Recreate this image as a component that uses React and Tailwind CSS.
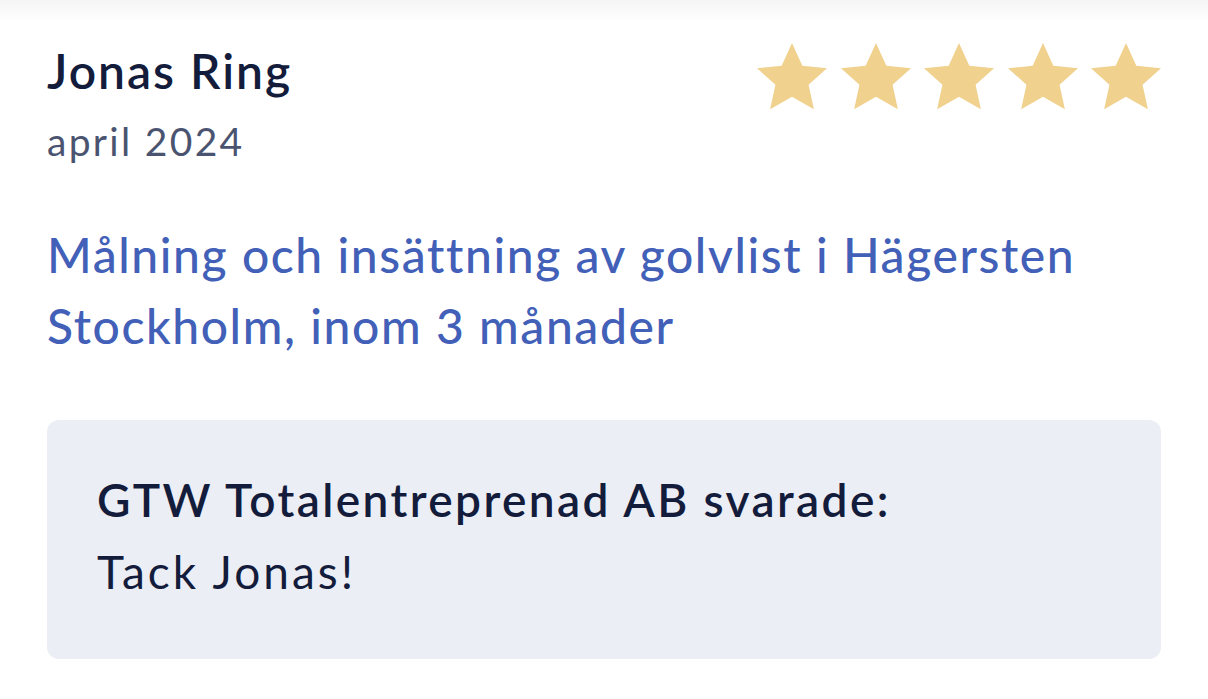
const Star = () => (
  <svg width="70" height="68" viewBox="0.8 0.6 22.4 21.2" className="shrink-0">
    <path d="M12 0.6l3.3 7.3 7.9 0.8-5.9 5.3 1.7 7.8L12 17.8l-7 4 1.7-7.8L0.8 8.7l7.9-0.8z" fill="#f0d18e" />
  </svg>
);

export default function App() {
  return (
    <div
      className="min-h-screen bg-white"
      style={{ fontFamily: "Lato, 'Noto Sans', sans-serif" }}
    >
      <div className="h-[22px] bg-gradient-to-b from-[#f5f5f6] to-white" />

      <div className="px-[47px] pt-[17px]">
        {/* Header row */}
        <div className="flex items-start justify-between">
          <div>
            <h2 className="text-[48px] leading-[64px] font-semibold tracking-[2px] text-[#141c3c]">
              Jonas Ring
            </h2>
            <p className="text-[39px] leading-[76px] tracking-[2.3px] text-[#4a5470]">
              april 2024
            </p>
          </div>
          <div className="flex gap-[13.5px] mt-[3px]">
            <Star />
            <Star />
            <Star />
            <Star />
            <Star />
          </div>
        </div>

        {/* Title */}
        <p className="mt-[40px] text-[48px] leading-[71px] font-medium tracking-[1.6px] text-[#4260b8]">
          Målning och insättning av golvlist i Hägersten
          <br />
          Stockholm, inom 3 månader
        </p>

        {/* Reply */}
        <div className="mt-[59px] bg-[#eceef6] rounded-xl px-[50px] pt-[44px] pb-[51px]">
          <p className="text-[46px] leading-[72px] font-semibold tracking-[2.4px] text-[#141c3c]">
            GTW Totalentreprenad AB svarade:
          </p>
          <p className="text-[46px] leading-[72px] tracking-[3px] text-[#141c3c]">Tack Jonas!</p>
        </div>
      </div>
    </div>
  );
}
